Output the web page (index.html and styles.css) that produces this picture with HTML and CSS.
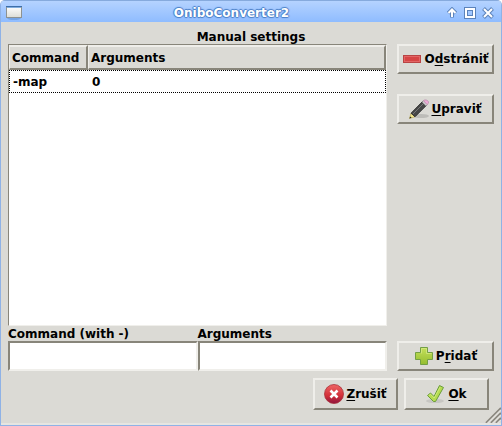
FILE: index.html
```html
<!DOCTYPE html>
<html lang="sk">
<head>
<meta charset="utf-8">
<title>OniboConverter2</title>
<link rel="stylesheet" href="styles.css">
</head>
<body>
<div class="window">
  <header class="titlebar">
    <svg class="app-icon" width="18" height="16" viewBox="0 0 18 16" aria-hidden="true">
      <defs><linearGradient id="pane" x2="0" y2="1"><stop offset="0" stop-color="#fff"/><stop offset="1" stop-color="#dcddd6"/></linearGradient></defs>
      <ellipse cx="9" cy="13" rx="7" ry="2" fill="#5f92d6" opacity=".6"/>
      <rect x="1.5" y="1.5" width="15" height="11" fill="url(#pane)" stroke="#8d9292"/>
      <path d="M1 1.5h16" stroke="#3d6ea8"/><path d="M2 2.5h14" stroke="#83aede"/>
    </svg>
    <h1 class="window-title">OniboConverter2</h1>
    <div class="window-controls">
      <button class="control" type="button" aria-label="Shade">
        <svg width="12" height="12" viewBox="0 0 12 12"><path class="halo" d="M6 10.500V3M2.300 6.200L6 2.500l3.700 3.700"/><path class="glyph" d="M6 10V3M2.500 6L6 2.500L9.500 6"/></svg>
      </button>
      <button class="control" type="button" aria-label="Maximize">
        <svg width="12" height="12" viewBox="0 0 12 12"><path class="halo" d="M2 2h8v8h-8z"/><path class="glyph" d="M2 2h8v8h-8z"/></svg>
      </button>
      <button class="control" type="button" aria-label="Close">
        <svg width="12" height="12" viewBox="0 0 12 12"><path class="halo" d="M1.500 1.500l9 9M10.500 1.500l-9 9"/><path class="glyph" d="M2 2l8 8M10 2l-8 8"/></svg>
      </button>
    </div>
  </header>

  <main class="content">
    <h2 class="heading">Manual settings</h2>
    <div class="settings">
      <div class="list">
        <table class="commands">
          <thead><tr><th class="col-command" scope="col">Command</th><th scope="col">Arguments</th></tr></thead>
          <tbody><tr><td>-map</td><td>0</td></tr></tbody>
        </table>
      </div>
      <div class="side">
        <button class="button" type="button">
          <svg width="20" height="20" viewBox="0 0 20 20" aria-hidden="true">
            <rect x="1.500" y="6.500" width="17" height="7" fill="#d64545" stroke="#b94444"/>
            <rect x="2.500" y="7.500" width="15" height="5" fill="none" stroke="#e26565"/>
          </svg>
          <span>O<u>d</u>strániť</span>
        </button>
        <button class="button" type="button">
          <svg width="20" height="20" viewBox="0 0 20 20" aria-hidden="true">
            <ellipse cx="12" cy="17" rx="8" ry="2" fill="#777" opacity=".3"/>
            <path d="M0.500 19.500L2 14.200L6 17.800z" fill="#f2e58c" stroke="#b5a346" stroke-width=".6"/>
            <path d="M0.500 19.500l.6-2 1.500 1.200z" fill="#222"/>
            <path d="M2 14.200L13.500 2.500l4 3.800L6 17.800z" fill="#474747" stroke="#252525" stroke-width=".8"/>
            <path d="M4 15L15 4" stroke="#777" stroke-width="1"/>
            <path d="M13 3l1.500-1.500 4 4L17 7z" fill="#ccc" stroke="#888" stroke-width=".5"/>
            <path d="M14.500 1.700C16-.1 20.300 1.500 19.500 4.200L18 5.600z" fill="#ecabd7" stroke="#b886a8" stroke-width=".7"/>
          </svg>
          <span><u>U</u>praviť</span>
        </button>
      </div>
      <form class="fields">
        <div class="field"><label for="command">Command (with -)</label><input id="command" type="text"></div>
        <div class="field"><label for="arguments">Arguments</label><input id="arguments" type="text"></div>
      </form>
      <div class="add">
        <button class="button" type="button">
          <svg width="20" height="20" viewBox="0 0 20 20" aria-hidden="true">
            <defs><linearGradient id="green" x2="0" y2="1"><stop offset="0" stop-color="#c5e05c"/><stop offset="1" stop-color="#94bd2f"/></linearGradient></defs>
            <path d="M6.500 1.500h7v5h5v7h-5v5h-7v-5h-5v-7h5z" fill="url(#green)" stroke="#739f45" stroke-linejoin="round"/>
            <path d="M7.500 7.500v-5h5v5h5" fill="none" stroke="#d8eb88" stroke-width=".7"/>
          </svg>
          <span>P<u>r</u>idať</span>
        </button>
      </div>
    </div>
  </main>

  <footer class="actions">
    <button class="button" type="button">
      <svg width="20" height="20" viewBox="0 0 20 20" aria-hidden="true">
        <defs><linearGradient id="red" x2="0" y2="1"><stop offset="0" stop-color="#ee6565"/><stop offset=".6" stop-color="#d22f38"/><stop offset="1" stop-color="#8e1540"/></linearGradient></defs>
        <circle cx="10" cy="10" r="9.500" fill="url(#red)" stroke="#a93038" stroke-width=".8"/>
        <path d="M6.500 6.500l7 7M13.500 6.500l-7 7" stroke="#fff" stroke-width="2.600"/>
      </svg>
      <span><u>Z</u>rušiť</span>
    </button>
    <button class="button" type="button">
      <svg width="20" height="20" viewBox="0 0 20 20" aria-hidden="true">
        <ellipse cx="9" cy="17" rx="9" ry="2" fill="#777" opacity=".2"/>
        <path d="M1.500 11.500l3-2.500 3.500 3.500L13.500 1.500l4 2L9.500 17.500H7.500z" fill="#b5dc50" stroke="#6b9d3d" stroke-linejoin="round"/>
        <path d="M3 11.500l1.500-1.200 3.700 3.700L14.200 3" fill="none" stroke="#d5ec83" stroke-width=".8"/>
      </svg>
      <span><u>O</u>k</span>
    </button>
    <svg class="grip" width="16" height="16" viewBox="0 0 16 16" aria-hidden="true">
      <path d="M1 16L16 1M6 16L16 6M11 16l5-5" stroke="#8b887f" stroke-width="2"/>
      <path d="M2.500 16L16 2.500M7.500 16L16 7.500M12.500 16l3.500-3.500" stroke="#f4f3ef" stroke-width="1"/>
    </svg>
  </footer>
</div>
</body>
</html>
```
FILE: styles.css
```css
* {
  box-sizing: border-box;
}

body {
  margin: 0;
  background: #fff;
  color: #000;
  font: bold 12px/14px "DejaVu Sans", sans-serif;
}

h1,
h2 {
  margin: 0;
  font-size: inherit;
}

button,
input {
  font: inherit;
  color: inherit;
}

.window {
  display: flex;
  flex-direction: column;
  min-height: 100vh;
  border: 1px solid #8fb2e6;
  border-top: 0;
  border-radius: 5px 5px 0 0;
  background: #dbdad5;
  overflow: hidden;
}

.titlebar {
  display: grid;
  grid-template-columns: 20px 1fr 60px;
  align-items: center;
  height: 22px;
  padding: 2px 3px 0 4px;
  border-top: 1px solid #86aadd;
  background: linear-gradient(#b5d3ff, #8fbcff);
}

.window-title {
  color: #fff;
  text-align: center;
  text-shadow: 1px 0 1px #4a7fc6, -1px 0 1px #4a7fc6, 0 1px 1px #4a7fc6, 0 -1px 1px #4a7fc6;
}

.window-controls {
  display: flex;
  justify-content: flex-end;
  gap: 6px;
  padding-right: 4px;
}

.control {
  width: 12px;
  height: 12px;
  padding: 0;
  border: 0;
  background: none;
}

.control svg {
  display: block;
}

.halo,
.glyph {
  fill: none;
  stroke: #5c83ba;
  stroke-width: 4;
}

.glyph {
  stroke: #fff;
  stroke-width: 2;
}

.content {
  flex: 1;
  display: flex;
  flex-direction: column;
  padding: 8px 7px 0;
}

.heading {
  text-align: center;
}

.settings {
  flex: 1;
  display: grid;
  grid-template-columns: 1fr 97px;
  grid-template-rows: 1fr auto;
  column-gap: 10px;
}

.list {
  border: 1px solid #f0efeb;
  border-top-color: #88857a;
  border-left-color: #88857a;
  background: #fff;
}

.commands {
  width: 100%;
  border-collapse: separate;
  border-spacing: 0;
  text-align: left;
}

.commands th {
  height: 25px;
  padding: 1px 2px 0;
  border: 2px solid #88857a;
  border-top-color: #efeeea;
  border-left-color: #efeeea;
  border-left-width: 1px;
  background: #dbdad5;
}

.commands .col-command {
  width: 79px;
}

.commands td {
  height: 23px;
  padding: 1px 4px 0;
}

.commands tbody tr {
  outline: 1px dotted #000;
  outline-offset: -1px;
}

.side {
  display: flex;
  flex-direction: column;
  gap: 20px;
}

.fields {
  display: grid;
  grid-template-columns: 1fr 1fr;
  padding-top: 1px;
}

.field {
  display: flex;
  flex-direction: column;
}

.field input {
  width: 100%;
  height: 30px;
  padding: 2px 4px;
  border: 2px solid #f0efeb;
  border-top-color: #88857a;
  border-left-color: #88857a;
  border-radius: 0;
  background: #fff;
}

.add {
  display: flex;
  align-items: flex-end;
}

.button {
  display: flex;
  align-items: center;
  justify-content: center;
  gap: 2px;
  width: 100%;
  height: 30px;
  padding: 0;
  border: 2px solid #88857a;
  border-top-color: #efeeea;
  border-left-color: #efeeea;
  background: #dbdad5;
}

.button svg {
  flex: none;
}

.button u {
  text-decoration-thickness: 1px;
  text-underline-offset: 2px;
}

.actions {
  display: flex;
  justify-content: flex-end;
  gap: 6px;
  padding: 7px 12px 13px;
  border-bottom: 2px solid #e6e5e1;
  position: relative;
}

.actions .button {
  width: 85px;
  height: 32px;
}

.grip {
  position: absolute;
  right: 0;
  bottom: 0;
}
```
